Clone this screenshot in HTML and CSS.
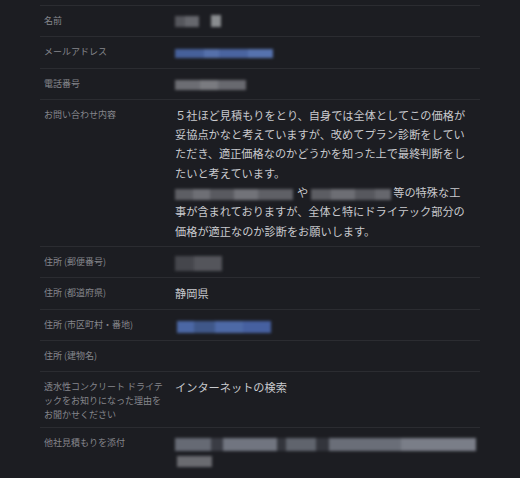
FILE: index.html
```html
<!DOCTYPE html>
<html lang="ja">
<head>
    <meta charset="UTF-8">
    <meta name="viewport" content="width=device-width, initial-scale=1.0">
    <title>お問い合わせ内容</title>
    <link rel="stylesheet" href="styles.css">
</head>
<body>
    <div class="entry-list">
        <div class="entry-row">
            <div class="entry-label">名前</div>
            <div class="entry-value">
                <span class="blur blur-name1"></span><span class="blur blur-name2"></span>
            </div>
        </div>
        <div class="entry-row">
            <div class="entry-label">メールアドレス</div>
            <div class="entry-value">
                <span class="blur blur-mail"></span>
            </div>
        </div>
        <div class="entry-row">
            <div class="entry-label">電話番号</div>
            <div class="entry-value">
                <span class="blur blur-tel"></span>
            </div>
        </div>
        <div class="entry-row">
            <div class="entry-label">お問い合わせ内容</div>
            <div class="entry-value">
                <p class="message">５社ほど見積もりをとり、自身では全体としてこの価格が妥協点かなと考えていますが、改めてプラン診断をしていただき、適正価格なのかどうかを知った上で最終判断をしたいと考えています。</p>
                <p class="message"><span class="blur blur-word1"></span><span>や</span><span class="blur blur-word2"></span>等の特殊な工事が含まれておりますが、全体と特にドライテック部分の価格が適正なのか診断をお願いします。</p>
            </div>
        </div>
        <div class="entry-row">
            <div class="entry-label">住所 (郵便番号)</div>
            <div class="entry-value">
                <span class="blur blur-zip"></span>
            </div>
        </div>
        <div class="entry-row">
            <div class="entry-label">住所 (都道府県)</div>
            <div class="entry-value">静岡県</div>
        </div>
        <div class="entry-row">
            <div class="entry-label">住所 (市区町村・番地)</div>
            <div class="entry-value">
                <span class="blur blur-city"></span>
            </div>
        </div>
        <div class="entry-row">
            <div class="entry-label">住所 (建物名)</div>
            <div class="entry-value"></div>
        </div>
        <div class="entry-row">
            <div class="entry-label">透水性コンクリート ドライテックをお知りになった理由をお聞かせください</div>
            <div class="entry-value">インターネットの検索</div>
        </div>
        <div class="entry-row">
            <div class="entry-label">他社見積もりを添付</div>
            <div class="entry-value files">
                <div class="blur blur-file1"></div>
                <div class="blur blur-file2"></div>
            </div>
        </div>
    </div>
</body>
</html>
```

FILE: styles.css
```css
body {
    margin: 0;
    background-color: #1c1d22;
    font-family: "Noto Sans CJK JP", "Noto Sans", sans-serif;
}

.entry-list {
    width: 440px;
    margin: 5px 40px 0;
}

.entry-row {
    display: flex;
    border-top: 1px solid #2b2c31;
    padding: 6px 0 5px;
}

.entry-label {
    width: 123px;
    padding: 2px 0 0 4px;
    font-size: 9px;
    line-height: 14px;
    color: #85868c;
    flex-shrink: 0;
}

.entry-value {
    width: 294px;
    min-height: 19px;
    margin-left: 8px;
    font-size: 11.2px;
    line-height: 19.3px;
    color: #c9cace;
}

.message {
    margin: 0;
}

/* redacted (mosaic) values */
.blur {
    display: inline-block;
    vertical-align: middle;
    filter: blur(1.5px);
}

.blur-name1 {
    width: 24px;
    height: 11px;
    margin-top: -3px;
    background: linear-gradient(90deg, #55565c 0 40%, #66676d 40% 100%);
}

.blur-name2 {
    width: 10px;
    height: 12px;
    margin: -3px 0 0 12px;
    background: #8a8d90;
}

.blur-mail {
    width: 98px;
    height: 9px;
    margin-top: -2px;
    background: linear-gradient(90deg, #46609a 0 30%, #5570ab 30% 45%, #4a64a0 45% 75%, #5672ae 75% 100%);
}

.blur-tel {
    width: 71px;
    height: 10px;
    margin-top: -2px;
    background: linear-gradient(90deg, #6c6d73 0 35%, #7a7b80 35% 60%, #68696f 60% 100%);
}

.blur-word1 {
    width: 118px;
    height: 11px;
    margin-right: 4px;
    background: linear-gradient(90deg, #5d5e64 0 15%, #6e6f75 15% 30%, #595a60 30% 50%, #727379 50% 70%, #5f6066 70% 100%);
}

.blur-word2 {
    width: 80px;
    height: 11px;
    margin: 0 2px 0 3px;
    background: linear-gradient(90deg, #5c5d63 0 25%, #6d6e74 25% 55%, #57585e 55% 80%, #66676d 80% 100%);
}

.blur-zip {
    width: 47px;
    height: 15px;
    background: linear-gradient(90deg, #45464c 0 40%, #54555b 40% 100%);
}

.blur-city {
    width: 94px;
    height: 12px;
    margin-left: 2px;
    background: linear-gradient(90deg, #4b67a4 0 18%, #3f5789 18% 40%, #4d69a6 40% 70%, #4660a0 70% 100%);
}

.files {
    padding-top: 4px;
    line-height: 16px;
}

.files .blur {
    display: block;
}

.blur-file1 {
    width: 301px;
    height: 13px;
    background: linear-gradient(90deg, #666a74 0 12%, #3a3c44 12% 16%, #717580 16% 34%, #33353c 34% 37%, #60646d 37% 47%, #33353c 47% 51%, #6a6e78 51% 75%, #7a7e88 75% 100%);
}

.blur-file2 {
    width: 35px;
    height: 11px;
    margin: 5px 0 0 2px;
    background: #6a6b70;
}
```
